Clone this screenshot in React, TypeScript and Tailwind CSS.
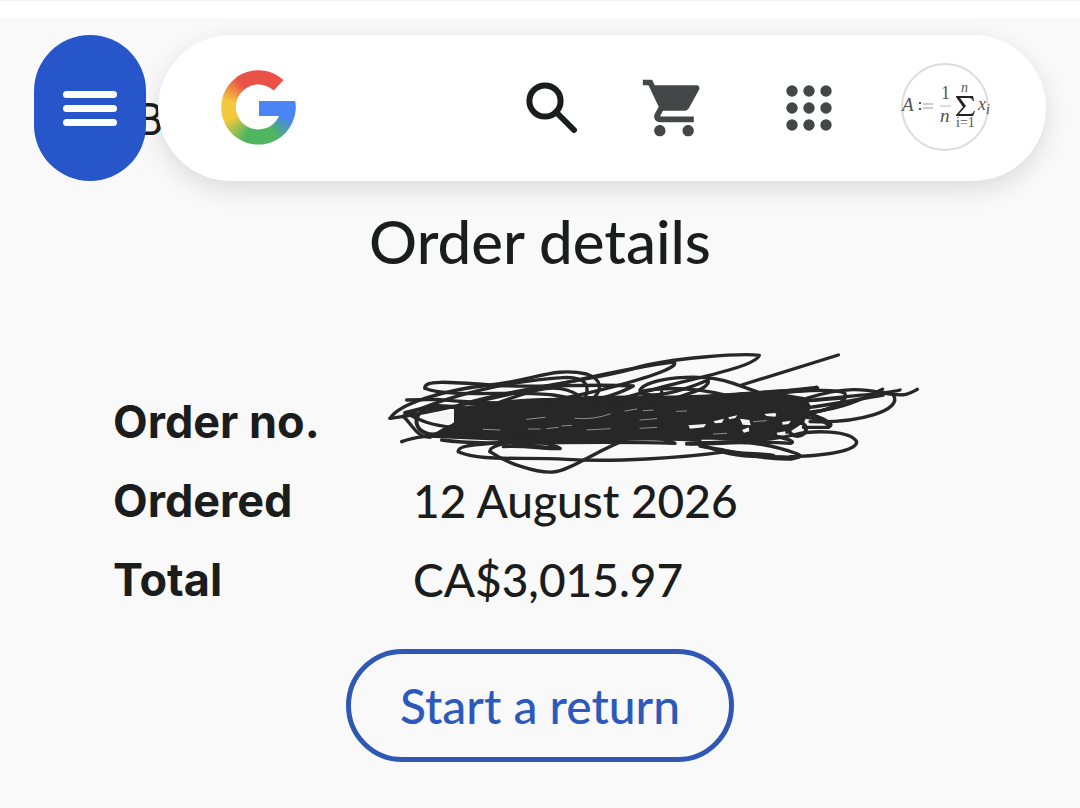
import { MdShoppingCart } from "react-icons/md";

const DETAILS = [
  { label: "Ordered", value: "12 August 2026" },
  { label: "Total", value: "CA$3,015.97" },
];

const LABEL_CLASS = "font-['Inter',sans-serif] text-[45px] font-bold";

const APP_DOTS = [6, 23, 40];

// thin pen strokes, drawn on a 1650x420 canvas
const STROKES = [
  "M80 180 L170 178 C300 190 420 195 560 178 S900 190 1310 142",
  "M30 235 C60 190 190 150 330 135 S520 80 620 102 C670 120 665 150 640 175",
  "M30 235 C150 220 300 180 450 150 S760 80 880 66 C900 75 850 100 700 140 S420 205 240 190",
  "M135 145 C130 120 200 125 330 135 S640 130 760 138 C720 160 640 185 540 200",
  "M135 145 C200 175 420 150 520 165 S600 190 660 195",
  "M70 230 C200 165 400 120 560 112 C620 112 630 140 615 175",
  "M240 195 C420 140 650 120 760 86 S1090 40 1138 46 C1120 85 930 115 780 160 S560 200 400 205",
  "M350 190 C420 165 500 130 560 150 S600 180 580 200",
  "M1375 45 L1085 135",
  "M780 150 C800 115 960 95 1060 130 S1240 195 1290 220 C1330 240 1370 250 1345 262",
  "M780 160 C850 180 960 130 985 120 C990 150 920 160 840 190",
  "M1310 142 C1330 150 1250 155 1160 158 S960 175 780 200",
  "M780 155 C900 130 1040 160 1090 185",
  "M845 155 C850 210 830 240 900 250",
  "M1090 170 C1260 150 1370 145 1395 160 C1400 180 1370 210 1260 225",
  "M1280 175 C1420 130 1480 155 1530 162 S1590 160 1612 148",
  "M1230 190 C1400 165 1500 165 1560 150",
  "M1240 220 C1380 215 1450 175 1508 148",
  "M1540 165 C1570 210 1440 250 1290 245",
  "M1270 205 C1380 190 1420 180 1510 165",
  "M65 305 C130 280 200 290 320 280",
  "M70 228 C100 260 110 290 150 292",
  "M75 218 C110 235 140 255 220 262",
  "M75 218 C120 205 160 195 240 200",
  "M185 300 C330 320 560 300 885 310 C860 290 760 292 620 285",
  "M235 335 C230 310 330 315 420 300",
  "M235 335 C300 365 420 350 560 358 S900 355 1040 335",
  "M330 335 C325 310 440 300 520 290",
  "M330 335 C380 370 470 400 520 396 S650 330 760 290",
  "M370 320 C440 315 500 330 540 325 C520 310 440 300 400 300",
  "M410 310 C460 318 500 322 540 326",
  "M920 312 C1020 305 1110 300 1200 325 S1260 350 1235 357 C1150 360 1060 335 960 318",
  "M960 312 C1040 350 1120 340 1180 348",
  "M1230 350 C1380 345 1430 325 1430 305 C1410 270 1300 270 1240 285",
  "M1010 330 C1090 360 1180 345 1230 352",
  "M1020 328 C1080 345 1130 338 1180 346",
  "M1240 285 C1180 300 1100 305 920 310",
  "M1170 285 C1220 295 1250 305 1232 310 C1100 300 1000 315 930 312",
  "M1270 262 L1345 262 C1350 250 1310 235 1280 232",
  "M1280 222 C1320 228 1350 245 1350 256",
  // ragged edges of the filled middle
  "M160 195 C280 215 420 200 620 180",
  "M300 200 C460 160 700 190 900 176 S1180 150 1300 150",
  "M190 275 C240 250 220 240 260 225",
  "M150 285 C300 300 420 280 520 290",
  "M360 302 C600 300 760 290 960 300",
  "M1200 180 C1300 190 1380 170 1395 175",
  "M1200 240 C1260 220 1330 215 1390 195",
];

const BLOB =
  "M225 205 L340 195 L540 182 L820 184 L1000 172 L1200 162 L1275 175 L1290 200 L1270 245 L1200 292 L1100 300 L1000 296 L830 296 L560 305 L400 312 L380 300 L150 290 L185 270 L225 250 Z";

// lighter slivers left inside the filled middle
const GAPS = [
  "M585 235 Q640 240 690 222",
  "M440 238 L495 232 M445 267 L480 267 M500 266 L535 262",
  "M735 213 L770 207 M620 270 L690 266 M545 258 L575 256",
  "M310 268 L360 270 M780 240 L830 236 M790 212 L820 210",
  "M1120 245 L1160 242 M1000 282 L1040 280",
  "M780 265 L830 262 M890 214 L920 213",
];

// the bigger holes, mostly over the last digits
const HOLES = [
  "M150 222 L178 214 L190 222 L212 218 L214 228 L188 240 L150 238 Z",
  "M145 254 L182 256 L176 266 L155 266 Z",
  "M925 256 L978 252 L972 262 L930 266 Z",
  "M1000 244 L1032 236 L1026 248 L1006 250 Z",
  "M1045 232 L1072 226 L1066 234 L1048 238 Z",
  "M1080 236 L1108 240 L1112 256 L1088 254 Z",
  "M1086 270 L1106 262 L1108 274 L1092 278 Z",
  "M1152 222 L1192 218 L1186 230 L1160 228 Z",
  "M1206 246 L1232 242 L1228 252 L1208 254 Z",
  "M1234 272 L1270 266 L1266 280 L1240 282 Z",
  "M1190 278 L1216 274 L1218 288 L1192 286 Z",
];

function Scribble({ className }: { className?: string }) {
  return (
    <svg
      viewBox="0 0 1650 420"
      className={className}
      fill="none"
      stroke="#272727"
      strokeLinecap="round"
      strokeLinejoin="round"
      aria-hidden="true"
    >
      <path d={BLOB} fill="#272727" strokeWidth="6" />
      <g fill="#f4f4f4" stroke="none">
        {HOLES.map((d) => (
          <path key={d} d={d} />
        ))}
      </g>
      <g stroke="#8f8f8f" strokeWidth="3">
        {GAPS.map((d) => (
          <path key={d} d={d} />
        ))}
      </g>
      <g strokeWidth="10">
        {STROKES.map((d) => (
          <path key={d} d={d} />
        ))}
      </g>
      <g strokeWidth="12">
        <path d="M180 205 C130 195 105 225 110 250 S150 295 195 275" />
        <path d="M1072 262 C1080 300 1118 292 1118 264" />
        <path d="M1148 220 C1160 204 1190 206 1196 224" />
        <path d="M1195 245 Q1190 270 1165 290" />
        <ellipse cx="1252" cy="267" rx="26" ry="21" />
      </g>
    </svg>
  );
}

function GoogleLogo() {
  return (
    <span
      role="img"
      aria-label="Google"
      className="block h-[76px] w-[76px] bg-[conic-gradient(from_0deg_at_38px_38px,#ea5148_0deg,#ea5148_58deg,#4a84f5_60deg,#4a84f5_108deg,#4fb560_150deg,#4fb560_205deg,#f4c93e_250deg,#f4c93e_282deg,#ea5148_325deg,#ea5148_360deg)] pt-[31px] pl-[38px] [clip-path:path('M62.5_10A37.2_37.2_0_1_0_74_31H38V46H58A22.5_22.5_0_1_1_52.7_20.5Z')]"
    >
      <span className="block h-[15px] bg-[#4a84f5]" />
    </span>
  );
}

function SearchIcon() {
  return (
    <svg viewBox="0 0 52 52" className="size-[52px]" fill="none" stroke="#1b1c1c" strokeWidth="6">
      <circle cx="19" cy="19" r="15.6" />
      <path d="M30 30 L48 48" strokeLinecap="round" />
    </svg>
  );
}

function AppsIcon() {
  return (
    <svg viewBox="0 0 46 46" className="size-[46px]" fill="#444647">
      {APP_DOTS.map((cy) =>
        APP_DOTS.map((cx) => <circle key={`${cx}-${cy}`} cx={cx} cy={cy} r="5.7" />)
      )}
    </svg>
  );
}

function Avatar() {
  return (
    <svg viewBox="0 0 90 90" className="size-[90px]" fill="#555" fontFamily="Liberation Serif, serif">
      <circle cx="44" cy="44" r="43" fill="#fff" stroke="#dcdcdc" strokeWidth="2" />
      <text x="1" y="48" fontSize="19" fontStyle="italic">A</text>
      <path d="M18 39h2v2h-2z M18 45h2v2h-2z" />
      <path d="M22 41H32M22 45H32" stroke="#999" />
      <text x="40" y="36" fontSize="18">1</text>
      <path d="M39 43H50" stroke="#bbb" />
      <text x="39" y="59" fontSize="19" fontStyle="italic">n</text>
      <text x="60" y="29" fontSize="14" fontStyle="italic">n</text>
      <path d="M55 33H72L73 38H72Q71 35 68 35H59L65 43L58 51H69Q72 51 73 48H74L72 53H55V52L62 44L55 34Z" fill="#222" />
      <text x="55" y="64" fontSize="14">i=1</text>
      <text x="77" y="47" fontSize="18" fontStyle="italic">x</text>
      <text x="85" y="51" fontSize="14" fontStyle="italic">i</text>
    </svg>
  );
}

export default function App() {
  return (
    <div className="min-h-screen bg-[#f9f9f9] font-['Lato',sans-serif] text-[#1b1c1c]">
      <div className="h-[18px] border-t border-[#f4f4f4] bg-white" />

      <header className="relative flex items-stretch gap-3 px-[34px] pt-[17px]">
        <span className="absolute top-[78px] left-[136px] font-['Roboto',sans-serif] text-[44px] leading-[48px]">
          B
        </span>

        <button
          type="button"
          aria-label="Menu"
          className="relative flex h-[146px] w-28 shrink-0 flex-col items-center justify-center gap-[7px] rounded-full bg-[#2656c9]"
        >
          <span className="h-[7px] w-[54px] rounded-full bg-white" />
          <span className="h-[7px] w-[54px] rounded-full bg-white" />
          <span className="h-[7px] w-[54px] rounded-full bg-white" />
        </button>

        <nav className="relative flex flex-1 items-center justify-between rounded-full bg-white pr-[55px] pl-[63px] shadow-[0_8px_24px_rgba(0,0,0,0.12)]">
          <a href="#home">
            <GoogleLogo />
          </a>
          <div className="flex items-center gap-[66px]">
            <button type="button" aria-label="Search">
              <SearchIcon />
            </button>
            <button type="button" aria-label="Cart" className="mr-3 -ml-1">
              <MdShoppingCart className="size-[68px] text-[#444647]" />
            </button>
            <button type="button" aria-label="Google apps" className="mr-[3px]">
              <AppsIcon />
            </button>
            <button type="button" aria-label="Account">
              <Avatar />
            </button>
          </div>
        </nav>
      </header>

      <main className="flex flex-col items-center px-[113px] pt-6">
        <h1 className="text-[60px] leading-[72px] font-medium">Order details</h1>

        <dl className="mt-[113px] grid w-full grid-cols-[300px_1fr] gap-y-[15px] text-[46px] leading-[64px]">
          <dt className={LABEL_CLASS}>Order no.</dt>
          <dd className="relative">
            <Scribble className="absolute -top-[50px] -left-[33px] h-[140px] w-[550px]" />
          </dd>
          {DETAILS.map(({ label, value }) => (
            <div key={label} className="contents">
              <dt className={LABEL_CLASS}>{label}</dt>
              <dd className="font-medium">{value}</dd>
            </div>
          ))}
        </dl>

        <button
          type="button"
          className="mt-[37px] h-[113px] rounded-full border-[5px] border-[#2f58b4] px-[49px] text-[48px] font-medium text-[#2c5abc]"
        >
          Start a return
        </button>
      </main>
    </div>
  );
}
